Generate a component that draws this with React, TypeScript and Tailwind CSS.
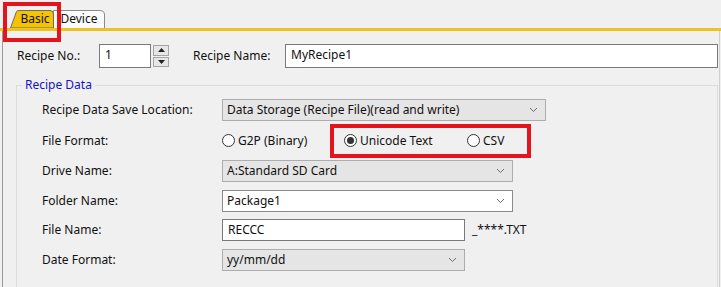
import React from "react";

const Chevron = () => (
  <svg width="9" height="6" viewBox="0 0 9 6" className="shrink-0">
    <path d="M1 1 L4.5 4.5 L8 1" fill="none" stroke="#6d6d6d" strokeWidth="1" />
  </svg>
);

function Select({ value, width, gray = true }: { value: string; width: string; gray?: boolean }) {
  return (
    <div
      className={`${width} h-[22px] flex items-center justify-between pl-[4px] pr-[7px] border ${
        gray ? "bg-[#e5e5e5] border-[#adadad]" : "bg-white border-[#8a8a8a]"
      }`}
    >
      <span>{value}</span>
      <Chevron />
    </div>
  );
}

function Radio({ label, checked = false }: { label: string; checked?: boolean }) {
  return (
    <div className="flex items-center gap-[3px]">
      <span className="w-[13px] h-[13px] rounded-full border border-[#333] bg-white flex items-center justify-center">
        {checked && <span className="w-[7px] h-[7px] rounded-full bg-[#333]" />}
      </span>
      <span>{label}</span>
    </div>
  );
}

function Row({ label, children, className = "" }: { label: string; children: React.ReactNode; className?: string }) {
  return (
    <div className={`flex items-center ${className}`}>
      <div className="w-[180px] shrink-0">{label}</div>
      {children}
    </div>
  );
}

export default function App() {
  return (
    <div
      className="relative w-[721px] h-[287px] overflow-hidden bg-[#f0f0f0] text-[12px] text-[#111]"
      style={{ fontFamily: '"Noto Sans", "DejaVu Sans", sans-serif' }}
    >
      {/* tabs */}
      <div className="h-[28px] flex items-end pl-[9px]">
        <div className="relative w-[46px] h-[18px] z-10 flex items-center justify-center pl-[6px]">
          <svg width="46" height="18" viewBox="0 0 46 18" className="absolute inset-0">
            <path d="M1.5 18 L7.5 1.5 Q8 0.5 10 0.5 L41 0.5 Q44.5 0.5 44.5 4 L44.5 18 Z" fill="#f5c400" stroke="#6b6b6b" strokeWidth="1" />
          </svg>
          <span className="relative leading-none">Basic</span>
        </div>
        <div className="relative w-[52px] h-[18px] -ml-[2px] flex items-center justify-center">
          <svg width="52" height="18" viewBox="0 0 52 18" className="absolute inset-0">
            <path d="M0.5 18 L0.5 0.5 L47 0.5 Q51.5 0.5 51.5 5 L51.5 18" fill="#fbfbfb" stroke="#8a8a8a" strokeWidth="1" />
          </svg>
          <span className="relative leading-none">Device</span>
        </div>
      </div>
      <div className="h-[3px] bg-[#efc224]" />

      {/* panel */}
      <div className="ml-[2px] w-[718px] h-[256px] border-l border-r border-l-[#9a9a9a] border-r-[#d0d0d0] pt-[13px]">
        <div className="flex items-center h-[24px] pl-[14px]">
          <div className="w-[82px]">Recipe No.:</div>
          <div className="w-[52px] h-[24px] bg-white border border-[#7a7a7a] pl-[5px] pt-[2px] leading-[16px]">1</div>
          <div className="ml-[2px] w-[16px] h-[22px] flex flex-col gap-[1px]">
            <div className="flex-1 bg-[#e6e6e6] border border-[#a5a5a5] flex items-center justify-center">
              <svg width="7" height="4" viewBox="0 0 7 4"><path d="M0 4 L3.5 0 L7 4 Z" fill="#222" /></svg>
            </div>
            <div className="flex-1 bg-[#e6e6e6] border border-[#a5a5a5] flex items-center justify-center">
              <svg width="7" height="4" viewBox="0 0 7 4"><path d="M0 0 L3.5 4 L7 0 Z" fill="#222" /></svg>
            </div>
          </div>
          <div className="ml-[24px] w-[92px]">Recipe Name:</div>
          <div className="w-[433px] h-[24px] bg-white border border-[#7a7a7a] pl-[5px] pt-[2px] leading-[16px]">MyRecipe1</div>
        </div>

        {/* group box */}
        <div className="relative mt-[17px] ml-[13px] mr-[1px] h-[210px] border-t border-l border-r border-[#dcdcdc] pl-[25px] pt-[13px]">
          <span className="absolute -top-[9px] left-[5px] px-[3px] bg-[#f0f0f0] text-[#1414c8] leading-[16px]">Recipe Data</span>

          <Row label="Recipe Data Save Location:">
            <Select value="Data Storage (Recipe File)(read and write)" width="w-[324px]" />
          </Row>

          <Row label="File Format:" className="h-[39px]">
            <div className="w-[108px]">
              <Radio label="G2P (Binary)" />
            </div>
            <div className="h-[34px] w-[201px] border-4 border-[#e3141c] flex items-center pl-[10px]">
              <div className="w-[123px]">
                <Radio label="Unicode Text" checked />
              </div>
              <Radio label="CSV" />
            </div>
          </Row>

          <Row label="Drive Name:">
            <Select value="A:Standard SD Card" width="w-[291px]" />
          </Row>

          <Row label="Folder Name:" className="mt-[8px]">
            <Select value="Package1" width="w-[291px]" gray={false} />
          </Row>

          <Row label="File Name:" className="mt-[7px]">
            <div className="w-[243px] h-[22px] bg-white border border-[#7a7a7a] pl-[5px] leading-[20px]">RECCC</div>
            <span className="ml-[7px]">_****.TXT</span>
          </Row>

          <Row label="Date Format:" className="mt-[8px]">
            <Select value="yy/mm/dd" width="w-[243px]" />
          </Row>
        </div>
      </div>

      {/* annotation around the active tab */}
      <div className="absolute left-[3px] top-[2px] w-[58px] h-[40px] border-4 border-[#e3141c]" />
    </div>
  );
}
